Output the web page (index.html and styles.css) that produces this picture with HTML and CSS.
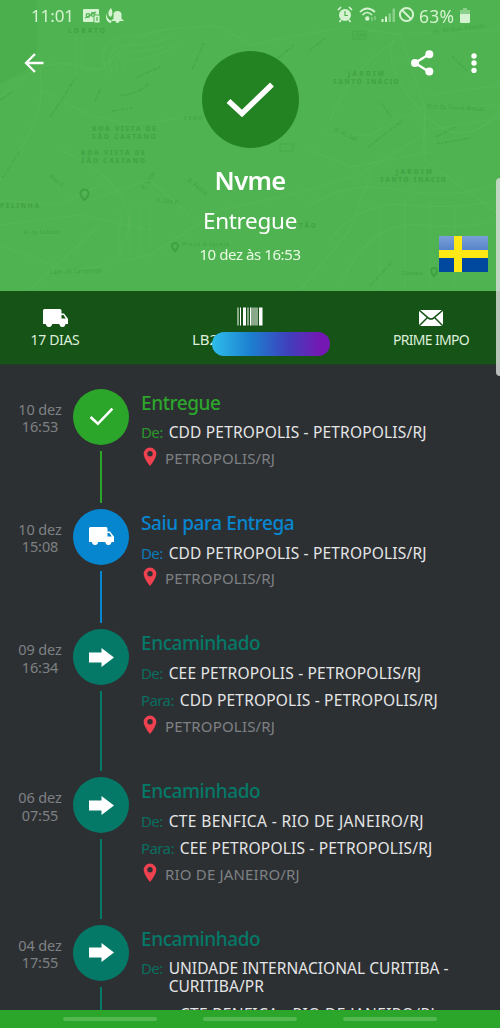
FILE: index.html
```html
<!DOCTYPE html>
<html lang="pt-BR">
<head>
<meta charset="utf-8">
<title>Rastreamento</title>
<link rel="stylesheet" href="styles.css">
</head>
<body>
<svg class="defs" width="0" height="0" aria-hidden="true">
  <symbol id="truck" viewBox="0 0 25 19"><path d="M1.500 0H17q1.500 0 1.500 1.500V4.500H21l4 5.200V15h-2.300a3.400 3.400 0 0 1-6.600 0H9.300a3.400 3.400 0 0 1-6.600 0H0V1.500Q0 0 1.500 0zM18.500 6v3.500h4.300L20.400 6z"/><circle cx="6" cy="15.500" r="2.500"/><circle cx="19.400" cy="15.500" r="2.500"/></symbol>
  <symbol id="check" viewBox="0 0 24 18"><path d="M1.500 9.500 8.500 16 22.500 1.500" fill="none" stroke="currentColor" stroke-width="2.500"/></symbol>
  <symbol id="arrow" viewBox="0 0 25 19"><path d="M0 4.500h12.500V0L25 9.500 12.500 19v-4.500H0z"/></symbol>
  <symbol id="pin" viewBox="0 0 14 20"><path fill-rule="evenodd" d="M7 .5a6.300 6.300 0 0 1 6.300 6.500C13.300 11.500 7 19 7 19S.7 11.500.7 7A6.300 6.300 0 0 1 7 .5zm0 3.600a2.700 2.700 0 1 0 0 5.400 2.700 2.700 0 0 0 0-5.400z"/></symbol>
</svg>
<div class="screen">
  <header class="header">
    <svg class="map" viewBox="0 0 500 291">
      <path class="area" d="M0 0H37L38 45Q36 65 20 74L0 84z"/>
      <g class="road">
        <path d="M0 98Q25 75 40 68T75 65L100 70 135 38 170 28 220 26 250 45 300 35 340 28 400 34 500 30"/>
        <path d="M76 35V75M82 40V70H100M108 77Q95 40 120 37T180 28"/>
        <path d="M112 73Q103 45 130 45T170 36M118 70Q112 53 132 52T165 47M124 68Q122 60 140 59T177 44"/>
        <path d="M40 70Q44 100 35 120T20 150L0 180M40 90 90 115 130 125 180 118M60 150Q100 165 120 195T115 260M90 200 150 180 190 215M120 210V260M130 205V255M140 205V250M150 205V245"/>
        <path d="M0 245 70 272 150 255 220 210 290 195 360 175 430 130 500 118M0 225 80 215 150 230M30 290 100 225M0 200 60 205 110 180"/>
        <path d="M345 25 400 35 425 108 423 150M395 37Q380 65 420 110T500 112M325 135 370 135 420 108 500 105M330 120Q350 70 395 40M310 150Q335 160 350 167L430 152M425 110V160L500 215M430 95 500 85"/>
        <path d="M310 205Q350 180 400 190T495 185M330 240Q360 200 410 205T500 200M340 285Q370 220 420 225T490 220M300 290 350 230 370 175M380 290V205M405 287V200M430 285V200M455 285V205"/>
      </g>
      <g class="street">
        <path d="M50 117 65 95 75 78M95 102 102 85M137 77 160 67M120 96Q140 93 148 84M112 111 132 108M192 70 204 43M0 100 12 92M2 178 20 151M278 58 294 45M309 51 325 38M368 147 402 121M381 103 392 118M452 56 467 71M370 286 392 262M436 137 457 126M436 144 470 138"/>
      </g>
      <g class="label">
        <text x="68" y="33" textLength="37">LOBATO</text>
        <text x="92" y="130.500" textLength="64">BOA VISTA DE</text><text x="92" y="138.500" textLength="64">SÃO CAETANO</text>
        <text x="81" y="154.500" textLength="64">BOA VISTA DE</text><text x="81" y="162.500" textLength="64">SÃO CAETANO</text>
        <text x="0" y="208" textLength="39">PELINHA</text>
        <text x="348" y="76" textLength="36">JARDIM</text><text x="333" y="84" textLength="66">SANTO INÁCIO</text>
        <text x="396" y="174" textLength="36">JARDIM</text><text x="380" y="182" textLength="66">SANTO INÁCIO</text>
        <text x="299" y="228" textLength="17">TÃO</text>
      </g>
      <g class="tiny">
        <text x="184" y="120" textLength="18">FERR</text>
        <text x="182" y="246" textLength="47">Praça e Igreja</text>
        <text x="402" y="275">Ginásio</text><text x="50" y="274" transform="rotate(-2 50 274)">Ladr. de Campinas</text>
        <text x="24" y="234">R. do Lobato</text><text x="433" y="34" transform="rotate(-7 433 34)">Av. Afrânio Peixoto</text>
        <text x="427" y="108" transform="rotate(3 427 108)">Rua da Guiné Bissau</text><text x="355" y="37">324</text>
        <text x="156" y="202" transform="rotate(6 156 202)">R. São P.</text>
        <text x="334" y="131" transform="rotate(25 334 131)">R. do Sol</text><text x="187" y="181" transform="rotate(38 187 181)">R. Pedra</text>
        <text x="49" y="177" transform="rotate(38 49 177)">Rua A.</text><text x="144" y="190" transform="rotate(-55 144 190)">R. Lima</text>
      </g>
      <g class="mark"><path d="M84.500 200q-4-4-4-6.500a4 4 0 0 1 8 0q0 2.500-4 6.500zM175 251q-3-3-3-5a3 3 0 0 1 6 0q0 2-3 5zM434 276q-3-3-3-5a3 3 0 0 1 6 0q0 2-3 5z"/><rect x="353" y="31" width="13" height="8"/><rect x="280" y="144" width="13" height="7"/></g>
    </svg>
    <div class="status">
      <span class="clock">11:01</span>
      <svg class="notif" viewBox="0 0 42 16" width="42" height="16"><rect x="0" y="1" width="16" height="13" rx="1"/><g class="cut"><circle cx="5" cy="7.500" r="1.800"/><circle cx="10" cy="6.500" r="1.800"/><path d="M2 10 13 4"/></g><rect x="11" y="7" width="6" height="8" class="badge"/><path class="cut" d="M14 9v4"/><path d="M28 0q-4 4-2 8l2 1q3-4 0-9zM23.500 5q0 6 5 8 0 2-1 2-6-2-4-10zM34.500 3a4 4 0 0 1 4 4v4l2 1v1h-4a2 2 0 0 1-4 0h-4v-1l2-1V7a4 4 0 0 1 4-4z"/></svg>
      <svg class="sys" viewBox="0 0 80 18" width="80" height="18">
        <circle cx="8" cy="9" r="6"/><path class="ln" d="M1 4 4 1M12 1l3 3M4 14l-1.500 2M12 14l1.500 2"/><path class="cut" d="M8 5v4.500h3"/>
        <path class="ln" d="M23 6Q30-1 38 6M25.500 9Q30 4 35 9"/><circle cx="30.300" cy="12.500" r="2.200"/><path class="faint" d="M35 11v4M38 10v4"/>
        <path d="M44.500 13h2v3h-2zM48 10.500h2V16h-2z"/><path class="dim" d="M51.500 7.500h2.500V16h-2.500zM55.500 2.500H58V16h-2.500z"/>
        <circle class="ring" cx="69.500" cy="8.500" r="6.600"/><path class="ring" d="m65 4 9 9"/>
      </svg>
      <span class="pct">63%</span>
      <svg class="bat" viewBox="0 0 10 15" width="10" height="15"><path class="dim" d="M3 0h4v2h3v4H0V2h3z"/><path d="M0 6h10v7.500q0 1.500-1.500 1.500h-7Q0 15 0 13.500z"/></svg>
    </div>
    <div class="hero">
      <svg class="back" viewBox="0 0 20 20" width="20" height="20"><path d="M19.500 10H2M11 1 2 10l9 9"/></svg>
      <div class="summary">
        <div class="medal"><svg viewBox="0 0 48 37" width="48" height="37"><path d="M2.500 20 16 32.500 46 3.500"/></svg></div>
        <h1 class="name">Nvme</h1>
        <p class="state">Entregue</p>
        <p class="when">10 dez às 16:53</p>
      </div>
      <div class="actions">
        <svg viewBox="0 0 23 26" width="23" height="26"><path class="link" d="M18.500 4 4 13l14.500 9"/><circle cx="18.300" cy="4.300" r="4"/><circle cx="4" cy="13" r="4"/><circle cx="18.300" cy="21.500" r="4"/></svg>
        <svg viewBox="0 0 6 20" width="6" height="20"><circle cx="3" cy="3" r="2.700"/><circle cx="3" cy="10" r="2.700"/><circle cx="3" cy="17.500" r="2.700"/></svg>
      </div>
    </div>
    <div class="flag"></div>
  </header>

  <section class="info">
    <div class="cell days"><svg width="25" height="19"><use href="#truck"/></svg><span>17 DIAS</span></div>
    <div class="cell code">
      <svg width="26" height="18" viewBox="0 0 26 18"><path d="M.5 0h1v18h-1zM3 0h1v18H3zM6 0h3v18H6zM10.500 0h1v18h-1zM13 0h1.500v18H13zM15.500 0h1v18h-1zM17.500 0h1v18h-1zM19.500 0h1v18h-1zM22 0h3.500v18H22z"/></svg>
      <span>LB2</span><i class="redact"></i>
    </div>
    <div class="cell mail"><svg width="24" height="16" viewBox="0 0 24 16"><path d="M0 0h24v16H0z"/><path class="fold" d="m0 0 10 8.500q2 1 4 0L24 0M0 16l8.500-8.500M24 16l-8.500-8.500"/></svg><span>PRIME IMPO</span></div>
  </section>

  <main class="timeline">
    <article class="event done">
      <time>10 dez<br>16:53</time>
      <div class="track"><div class="dot"><svg width="25" height="19"><use href="#check"/></svg></div><div class="line"></div></div>
      <div class="body"><h2>Entregue</h2>
        <div class="row"><b>De:</b><span>CDD PETROPOLIS - PETROPOLIS/RJ</span></div>
        <div class="place"><svg width="14" height="20"><use href="#pin"/></svg>PETROPOLIS/RJ</div></div>
    </article>
    <article class="event out">
      <time>10 dez<br>15:08</time>
      <div class="track"><div class="dot"><svg width="25" height="19"><use href="#truck"/></svg></div><div class="line"></div></div>
      <div class="body"><h2>Saiu para Entrega</h2>
        <div class="row"><b>De:</b><span>CDD PETROPOLIS - PETROPOLIS/RJ</span></div>
        <div class="place"><svg width="14" height="20"><use href="#pin"/></svg>PETROPOLIS/RJ</div></div>
    </article>
    <article class="event moved">
      <time>09 dez<br>16:34</time>
      <div class="track"><div class="dot"><svg width="25" height="19"><use href="#arrow"/></svg></div><div class="line"></div></div>
      <div class="body"><h2>Encaminhado</h2>
        <div class="row"><b>De:</b><span>CEE PETROPOLIS - PETROPOLIS/RJ</span></div>
        <div class="row"><b>Para:</b><span>CDD PETROPOLIS - PETROPOLIS/RJ</span></div>
        <div class="place"><svg width="14" height="20"><use href="#pin"/></svg>PETROPOLIS/RJ</div></div>
    </article>
    <article class="event moved">
      <time>06 dez<br>07:55</time>
      <div class="track"><div class="dot"><svg width="25" height="19"><use href="#arrow"/></svg></div><div class="line"></div></div>
      <div class="body"><h2>Encaminhado</h2>
        <div class="row loose"><b>De:</b><span>CTE BENFICA - RIO DE JANEIRO/RJ</span></div>
        <div class="row"><b>Para:</b><span>CEE PETROPOLIS - PETROPOLIS/RJ</span></div>
        <div class="place"><svg width="14" height="20"><use href="#pin"/></svg>RIO DE JANEIRO/RJ</div></div>
    </article>
    <article class="event moved">
      <time>04 dez<br>17:55</time>
      <div class="track"><div class="dot"><svg width="25" height="19"><use href="#arrow"/></svg></div><div class="line"></div></div>
      <div class="body"><h2>Encaminhado</h2>
        <div class="row tight"><b>De:</b><span>UNIDADE INTERNACIONAL CURITIBA -<br>CURITIBA/PR</span></div>
        <div class="row loose"><b>Para:</b><span>CTE BENFICA - RIO DE JANEIRO/RJ</span></div></div>
    </article>
  </main>
  <nav class="navbar"><i></i><i></i><i></i></nav>
  <div class="edge"></div>
</div>
</body>
</html>
```
FILE: styles.css
```css
* { box-sizing: border-box; }
body { margin: 0; background: #2d3033; font-family: "Noto Sans", sans-serif; color: #fff; }
h1, h2, p { margin: 0; }
svg { display: block; fill: currentColor; flex: none; }
.defs { position: absolute; }
.screen { position: relative; width: 500px; height: 1028px; overflow: hidden; display: flex; flex-direction: column; }

.header { position: relative; flex: none; height: 291px; background: #4fb351; isolation: isolate; }
.map { position: absolute; inset: 0; width: 500px; height: 291px; z-index: -1; }
.map .area { fill: #4baf4e; }
.map .road { fill: none; stroke: #5ab95b; stroke-width: 1.2; opacity: .65; }
.map .street { fill: none; stroke: #3c9c40; stroke-width: 1.5; stroke-dasharray: 4 1 2 2; opacity: .4; }
.map .label { fill: #369539; font-size: 6.5px; font-weight: 700; opacity: .55; }
.map .tiny { fill: #369539; font-size: 6px; opacity: .5; }
.map .mark { fill: none; stroke: #38953b; stroke-width: 2; opacity: .6; }
.map .mark rect { stroke-width: 1; opacity: .5; }

.status { display: flex; align-items: center; height: 32px; padding-left: 31px; color: #d5f3d0; font-size: 17px; line-height: 32px; }
.clock { width: 52px; letter-spacing: -.1px; }
.sys { margin-left: 212px; margin-top: -2px; }
.status .cut { fill: none; stroke: #4fb351; stroke-width: 1.2; }
.status .badge { stroke: #4fb351; }
.status .ln { fill: none; stroke: currentColor; stroke-width: 1.7; }
.status .ring { fill: none; stroke: currentColor; stroke-width: 2; }
.status .faint { stroke: currentColor; stroke-width: 1.5; opacity: .4; }
.status .dim { opacity: .45; }
.pct { width: 38px; margin-left: 2px; font-size: 17.5px; letter-spacing: .2px; }
.bat { margin-top: -1px; margin-left: 3px; }

.hero { display: grid; grid-template-columns: 150px 200px 150px; }
.back { margin: 21px 0 0 23.5px; fill: none; stroke: #fff; stroke-width: 2.3; }
.summary { display: flex; flex-direction: column; align-items: center; padding-top: 19px; }
.medal { width: 97px; height: 97px; border-radius: 50%; background: #238323; display: flex; align-items: center; justify-content: center; }
.medal svg { fill: none; stroke: #fff; stroke-width: 5.5; }
.name { margin-top: 14px; font-size: 25.5px; font-weight: 600; line-height: 36px; letter-spacing: -.7px; }
.state { margin-top: 7px; font-size: 22.5px; line-height: 32px; letter-spacing: -.3px; }
.when { margin-top: 7px; font-size: 15px; line-height: 21px; letter-spacing: -.42px; color: #e9fbe4; }
.actions { display: flex; align-items: flex-start; gap: 36.5px; padding: 18px 0 0 61px; }
.actions svg + svg { margin-top: 3px; }
.link { fill: none; stroke: #fff; stroke-width: 2.4; }
.flag { position: absolute; left: 439px; top: 236px; width: 49px; height: 36px;
  background:
    linear-gradient(90deg, transparent 15px, #ffe813 15px 23px, transparent 23px),
    linear-gradient(transparent 14px, #ffe813 14px 22px, transparent 22px),
    linear-gradient(#7c9fd8, #5685cb 14px, #00499f 22px, #00489d); }

.info { flex: none; height: 73px; background: #165317; display: grid; grid-template-columns: 110px 279px 84px; padding-top: 15px; box-shadow: 0 1px 2px #24402a; }
.cell { display: flex; flex-direction: column; align-items: center; color: #fff; font-size: 14px; line-height: 20px; white-space: nowrap; }
.cell span { color: #ddeeda; }
.cell svg { height: 19px; }
.days svg { margin-top: 3px; }
.days span { margin-top: 2px; letter-spacing: -.35px; }
.code { position: relative; }
.code svg { margin-top: 1px; }
.code span { align-self: flex-start; margin: 3px 0 0 82px; font-size: 15px; }
.redact { position: absolute; left: 102px; top: 26px; width: 118px; height: 24px; border-radius: 12px; background: linear-gradient(90deg, #2fbdea, #1c7fd0 33%, #403fbc 65%, #7518b3 92%); }
.mail svg { margin-top: 4px; height: 16px; }
.mail span { margin-top: 4px; letter-spacing: -.7px; }
.fold { fill: none; stroke: #165317; stroke-width: 1.5; }

.timeline { flex: 1; min-height: 0; overflow: hidden; padding-top: 24.5px; }
.event { display: grid; grid-template-columns: 73px 56px 1fr; }
.done { color: #2ca52b; } .out { color: #0786d0; } .moved { color: #047968; }
.event time { padding: 12px 0 0 7px; text-align: center; color: #7e8183; font-size: 14.5px; line-height: 17.5px; letter-spacing: -.1px; }
.track { display: flex; flex-direction: column; align-items: center; gap: 6px; }
.dot { width: 56px; height: 56px; border-radius: 50%; background: currentColor; display: flex; align-items: center; justify-content: center; flex: none; }
.dot svg { color: #fff; }
.line { width: 2px; flex: 1; background: currentColor; margin-bottom: 6px; }
.body { padding: 0 0 37px 12px; white-space: nowrap; }
.body h2 { font-size: 19px; font-weight: 500; line-height: 29px; margin-bottom: 1px; letter-spacing: -.42px; }
.row { display: flex; gap: 6px; padding: 4.7px 0; font-size: 15.5px; line-height: 18px; letter-spacing: .18px; }
.row b { font-weight: 400; font-size: 15px; letter-spacing: -.6px; opacity: .85; }
.row span { color: #e4e5e6; }
.row.loose { letter-spacing: .37px; }
.row.tight { letter-spacing: .05px; }
.place { display: flex; align-items: center; gap: 8px; height: 26px; padding-left: 2px; color: #7e8183; font-size: 15px; line-height: 24px; letter-spacing: .18px; padding-bottom: 2px; }
.place svg { margin-top: -2px; color: #ef414f; }

.navbar { flex: none; height: 18px; background: #2ca52b; display: flex; justify-content: center; gap: 46px; padding-top: 7px; }
.navbar i { width: 94px; height: 4px; border-radius: 2px; background: #52b950; }
.edge { position: absolute; left: 495.5px; top: 178px; width: 8px; height: 198px; border-radius: 5px; background: #dcdedcd0; }
```
